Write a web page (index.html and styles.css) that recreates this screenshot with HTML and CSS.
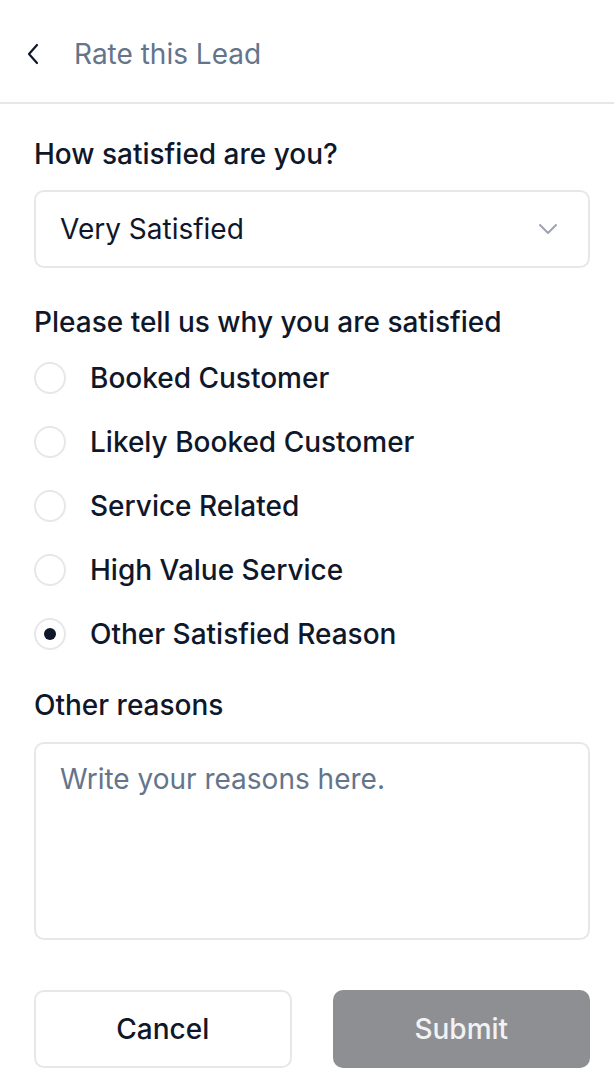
FILE: index.html
```html
<!DOCTYPE html>
<html>
<head>
<meta charset="utf-8">
<link rel="stylesheet" href="styles.css">
</head>
<body>
<header class="header">
  <svg class="back" width="14" height="22" viewBox="0 0 14 22"><path d="M11 2 L3 11 L11 20" fill="none" stroke="#0f172a" stroke-width="2.2" stroke-linecap="round" stroke-linejoin="round"/></svg>
  <span class="title">Rate this Lead</span>
</header>
<main class="content">
  <div class="label">How satisfied are you?</div>
  <div class="select">
    <span>Very Satisfied</span>
    <svg width="20" height="12" viewBox="0 0 20 12"><path d="M2 2 L10 10 L18 2" fill="none" stroke="#9ca3af" stroke-width="2" stroke-linecap="round" stroke-linejoin="round"/></svg>
  </div>
  <div class="label label-why">Please tell us why you are satisfied</div>
  <div class="radios">
    <div class="radio-row"><span class="radio"></span><span>Booked Customer</span></div>
    <div class="radio-row"><span class="radio"></span><span>Likely Booked Customer</span></div>
    <div class="radio-row"><span class="radio"></span><span>Service Related</span></div>
    <div class="radio-row"><span class="radio"></span><span>High Value Service</span></div>
    <div class="radio-row"><span class="radio checked"></span><span>Other Satisfied Reason</span></div>
  </div>
  <div class="label label-other">Other reasons</div>
  <div class="textarea">Write your reasons here.</div>
  <div class="buttons">
    <div class="btn cancel">Cancel</div>
    <div class="btn submit">Submit</div>
  </div>
</main>
</body>
</html>
```
FILE: styles.css
```css
* { box-sizing: border-box; }
body {
  margin: 0;
  font-family: Inter, "Noto Sans", sans-serif;
  color: #0f172a;
  background: #fff;
}
.header {
  height: 104px;
  border-bottom: 2px solid #e5e7eb;
  display: flex;
  align-items: center;
  padding: 6px 0 0 26px;
  gap: 34px;
}
.back { display: block; margin-top: 0; }
.title {
  font-size: 28px;
  color: #64748b;
  font-weight: 400;
}
.content {
  padding: 33px 24px 0 34px;
  display: flex;
  flex-direction: column;
}
.label {
  font-size: 28px;
  font-weight: 500;
  line-height: 34px;
}
.select {
  margin-top: 19px;
  height: 78px;
  border: 2px solid #e5e7eb;
  border-radius: 10px;
  display: flex;
  align-items: center;
  justify-content: space-between;
  padding: 0 30px 0 24px;
  font-size: 28px;
}
.label-why { margin-top: 37px; }
.radios {
  display: flex;
  flex-direction: column;
  margin-top: 7px;
}
.radio-row {
  height: 64px;
  display: flex;
  align-items: center;
  gap: 24px;
  font-size: 28px;
  font-weight: 500;
}
.radio {
  width: 32px;
  height: 32px;
  border-radius: 50%;
  border: 2px solid #e5e7eb;
  display: flex;
  align-items: center;
  justify-content: center;
  flex: none;
}
.radio.checked::after {
  content: "";
  width: 12px;
  height: 12px;
  border-radius: 50%;
  background: #0f172a;
}
.label-other { margin-top: 22px; }
.textarea {
  margin-top: 20px;
  height: 198px;
  border: 2px solid #e5e7eb;
  border-radius: 10px;
  padding: 18px 24px;
  font-size: 28px;
  line-height: 34px;
  color: #64748b;
}
.buttons {
  margin-top: 50px;
  display: grid;
  grid-template-columns: 1fr 1fr;
  gap: 41px;
}
.btn {
  height: 78px;
  border-radius: 10px;
  display: flex;
  align-items: center;
  justify-content: center;
  font-size: 28px;
  font-weight: 500;
}
.cancel {
  border: 2px solid #e5e7eb;
  color: #0f172a;
}
.submit {
  background: #8e8f93;
  color: #f1f2f4;
}
```
